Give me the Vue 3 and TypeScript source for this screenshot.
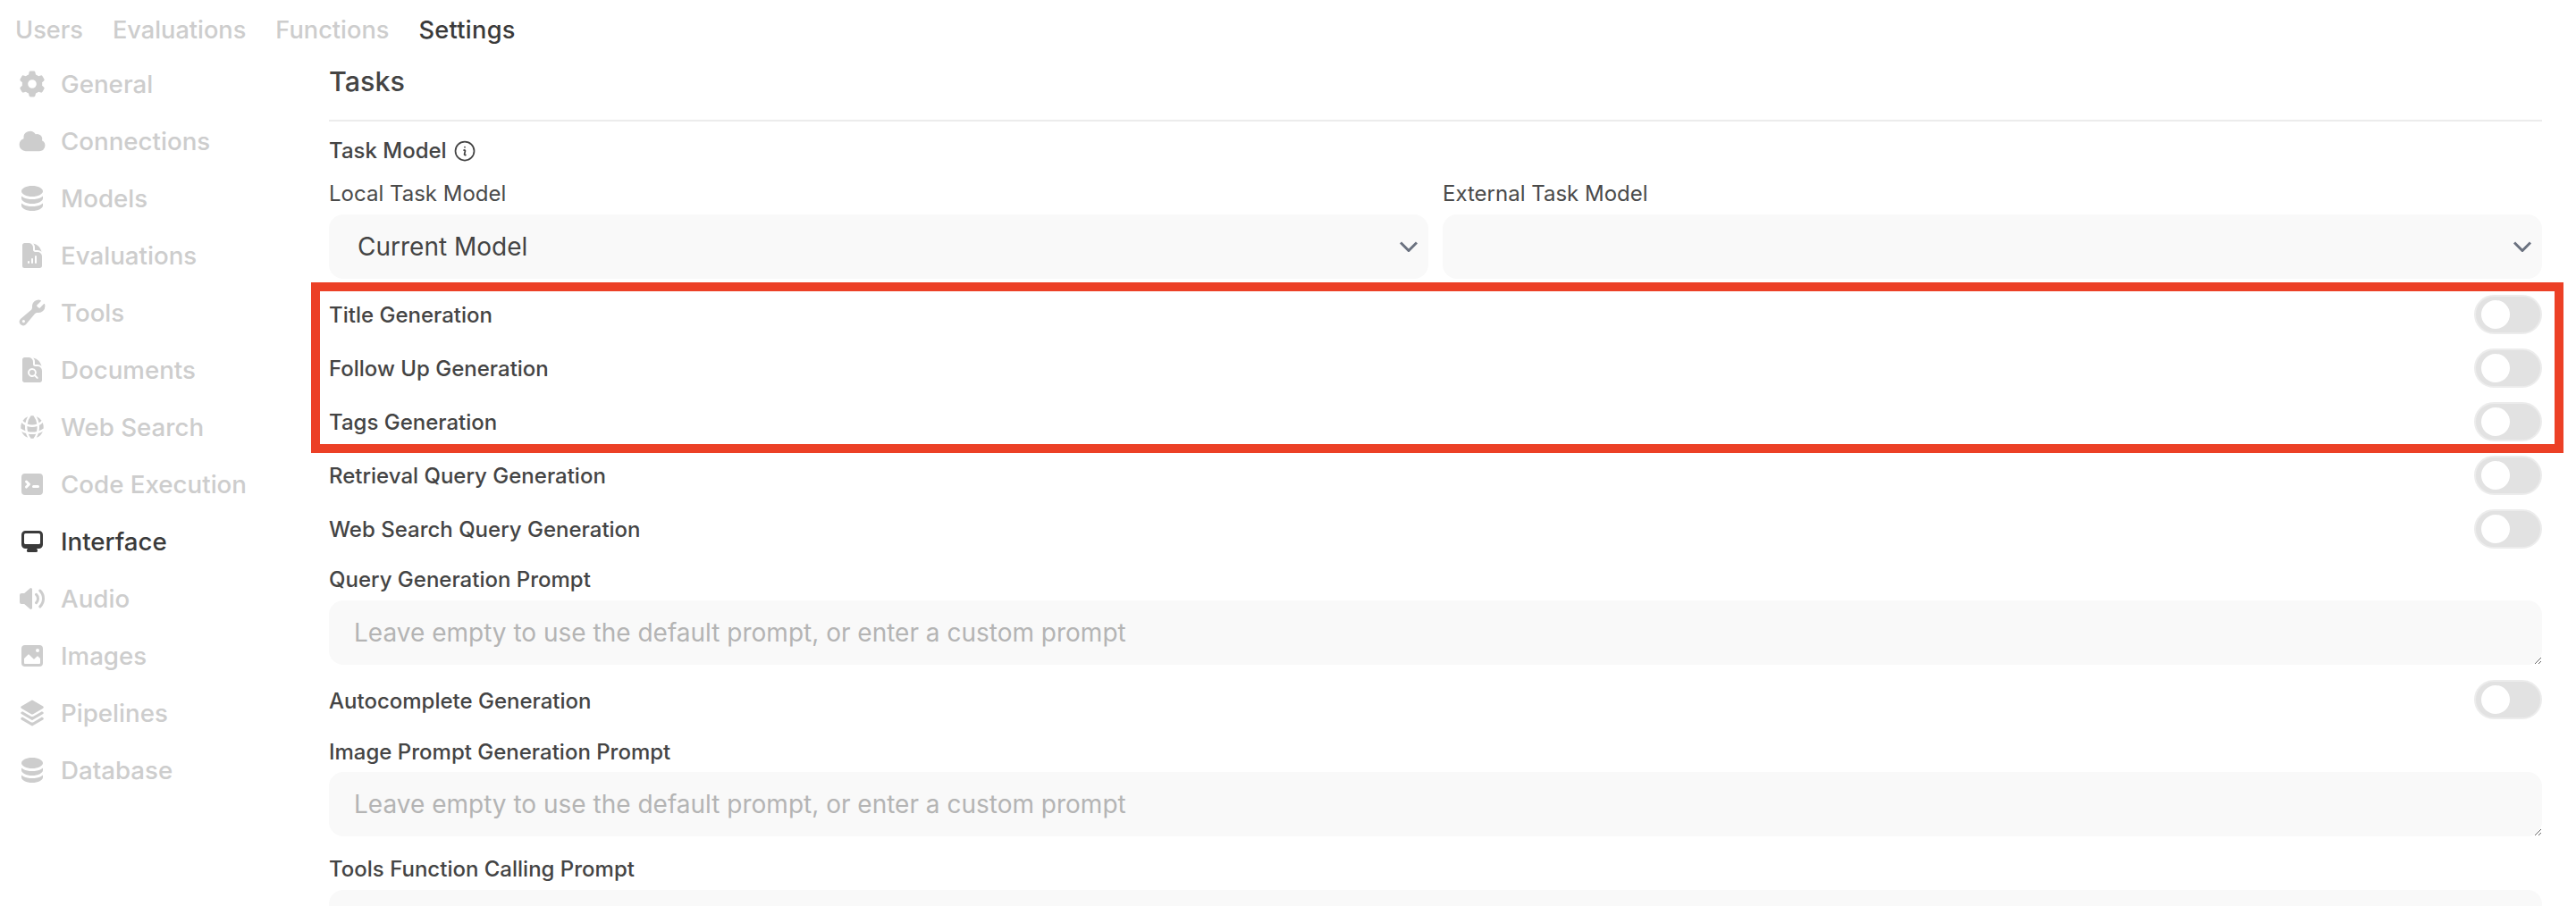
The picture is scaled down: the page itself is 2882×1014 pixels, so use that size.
<script setup lang="ts">
interface NavItem {
  label: string;
  icon: string;
  box: number;
  active?: boolean;
}

const tabs = ["Users", "Evaluations", "Functions", "Settings"];

const stack =
  "M8 7c3.314 0 6-1.343 6-3s-2.686-3-6-3-6 1.343-6 3 2.686 3 6 3ZM8 8.5c1.84 0 3.579-.37 4.914-1.037A6.33 6.33 0 0 0 14 6.78V8c0 1.657-2.686 3-6 3S2 9.657 2 8V6.78c.346.273.72.5 1.087.683C4.42 8.131 6.16 8.5 8 8.5ZM8 12.5c1.84 0 3.579-.37 4.914-1.037.366-.183.74-.41 1.086-.684V12c0 1.657-2.686 3-6 3s-6-1.343-6-3v-1.22c.346.273.72.5 1.087.683C4.42 12.131 6.16 12.5 8 12.5Z";

const navItems: NavItem[] = [
  { label: "General", box: 20, icon: "M7.84 1.804A1 1 0 0 1 8.82 1h2.36a1 1 0 0 1 .98.804l.331 1.652a6.993 6.993 0 0 1 1.929 1.115l1.598-.54a1 1 0 0 1 1.186.447l1.18 2.044a1 1 0 0 1-.205 1.251l-1.267 1.113a7.047 7.047 0 0 1 0 2.228l1.267 1.113a1 1 0 0 1 .206 1.25l-1.18 2.045a1 1 0 0 1-1.187.447l-1.598-.54a6.993 6.993 0 0 1-1.929 1.115l-.33 1.652a1 1 0 0 1-.98.804H8.82a1 1 0 0 1-.98-.804l-.331-1.652a6.993 6.993 0 0 1-1.929-1.115l-1.598.54a1 1 0 0 1-1.186-.447l-1.18-2.044a1 1 0 0 1 .205-1.251l1.267-1.114a7.05 7.05 0 0 1 0-2.227L1.821 7.773a1 1 0 0 1-.206-1.25l1.18-2.045a1 1 0 0 1 1.187-.447l1.598.54A6.992 6.992 0 0 1 7.51 3.456l.33-1.652ZM10 13a3 3 0 1 0 0-6 3 3 0 0 0 0 6Z" },
  { label: "Connections", box: 20, icon: "M1 12.5A4.5 4.5 0 005.5 17H15a4 4 0 001.866-7.539 3.504 3.504 0 00-4.504-4.272A4.5 4.5 0 004.06 8.235 4.502 4.502 0 001 12.5z" },
  { label: "Models", box: 16, icon: stack },
  { label: "Evaluations", box: 24, icon: "M5.625 1.5H9a3.75 3.75 0 0 1 3.75 3.75v1.875c0 1.036.84 1.875 1.875 1.875H16.5a3.75 3.75 0 0 1 3.75 3.75v7.875c0 1.035-.84 1.875-1.875 1.875H5.625a1.875 1.875 0 0 1-1.875-1.875V3.375c0-1.036.84-1.875 1.875-1.875ZM9.75 17.25a.75.75 0 0 0-1.5 0V18a.75.75 0 0 0 1.5 0v-.75Zm2.25-3a.75.75 0 0 1 .75.75v3a.75.75 0 0 1-1.5 0v-3a.75.75 0 0 1 .75-.75Zm3.75-1.5a.75.75 0 0 0-1.5 0V18a.75.75 0 0 0 1.5 0v-5.25ZM14.25 5.25a5.23 5.23 0 0 0-1.279-3.434 9.768 9.768 0 0 1 6.963 6.963A5.23 5.23 0 0 0 16.5 7.5h-1.875a.375.375 0 0 1-.375-.375V5.25Z" },
  { label: "Tools", box: 20, icon: "M19 5.5a4.5 4.5 0 01-4.791 4.49c-.873-.055-1.808.128-2.368.8l-6.024 7.23a2.724 2.724 0 11-3.837-3.837L9.21 8.16c.672-.56.855-1.495.8-2.368a4.5 4.5 0 015.873-4.575c.324.105.39.51.15.752L13.34 4.66a.455.455 0 00-.11.494 3.01 3.01 0 001.617 1.617c.17.07.363.02.493-.111l2.692-2.692c.241-.241.647-.174.752.15.14.435.216.9.216 1.382zM4 17a1 1 0 100-2 1 1 0 000 2z" },
  { label: "Documents", box: 24, icon: "M5.625 1.5c-1.036 0-1.875.84-1.875 1.875v17.25c0 1.035.84 1.875 1.875 1.875h12.75c1.035 0 1.875-.84 1.875-1.875V12.75A3.75 3.75 0 0 0 16.5 9h-1.875a1.875 1.875 0 0 1-1.875-1.875V5.25A3.75 3.75 0 0 0 9 1.5H5.625ZM9.75 14.25a2.25 2.25 0 1 1 4.5 0 2.25 2.25 0 0 1-4.5 0Zm2.25-3.75a3.75 3.75 0 1 0 1.96 6.95l1.76 1.76a.75.75 0 1 0 1.06-1.06l-1.76-1.76A3.75 3.75 0 0 0 12 10.5ZM14.25 5.25a5.23 5.23 0 0 0-1.279-3.434 9.768 9.768 0 0 1 6.963 6.963A5.23 5.23 0 0 0 16.5 7.5h-1.875a.375.375 0 0 1-.375-.375V5.25Z" },
  { label: "Web Search", box: 20, icon: "M16.555 5.412a8.028 8.028 0 00-3.503-2.81 14.899 14.899 0 011.663 4.472 8.547 8.547 0 001.84-1.662zM13.326 7.825a13.43 13.43 0 00-2.413-5.773 8.087 8.087 0 00-1.826 0 13.43 13.43 0 00-2.413 5.773A8.473 8.473 0 0010 8.5c1.18 0 2.304-.24 3.326-.675zM6.514 9.376A9.98 9.98 0 0010 10c1.226 0 2.4-.22 3.486-.624a13.54 13.54 0 01-.351 3.759A13.54 13.54 0 0110 13.5c-1.079 0-2.128-.127-3.134-.366a13.538 13.538 0 01-.352-3.758zM5.285 7.074a14.9 14.9 0 011.663-4.471 8.028 8.028 0 00-3.503 2.81c.529.638 1.149 1.199 1.84 1.66zM17.334 6.798a7.973 7.973 0 01.614 4.115 13.47 13.47 0 01-3.178 1.72 15.093 15.093 0 00.174-3.939 10.043 10.043 0 002.39-1.896zM2.666 6.798a10.042 10.042 0 002.39 1.896 15.196 15.196 0 00.174 3.94 13.472 13.472 0 01-3.178-1.72 7.973 7.973 0 01.615-4.115zM10 15c.898 0 1.778-.079 2.633-.23a13.473 13.473 0 01-1.72 3.178 8.099 8.099 0 01-1.826 0 13.47 13.47 0 01-1.72-3.178c.855.151 1.735.23 2.633.23zM14.357 14.357a14.912 14.912 0 01-1.305 3.04 8.027 8.027 0 004.345-4.345c-.953.542-1.971.981-3.04 1.305zM6.948 17.397a8.027 8.027 0 01-4.345-4.345c.953.542 1.971.981 3.04 1.305a14.912 14.912 0 001.305 3.04z" },
  { label: "Code Execution", box: 16, icon: "M2 4a2 2 0 0 1 2-2h8a2 2 0 0 1 2 2v8a2 2 0 0 1-2 2H4a2 2 0 0 1-2-2V4Zm2.22 1.97a.75.75 0 0 0 0 1.06l.97.97-.97.97a.75.75 0 1 0 1.06 1.06l1.5-1.5a.75.75 0 0 0 0-1.06l-1.5-1.5a.75.75 0 0 0-1.06 0ZM8.75 8.5a.75.75 0 0 0 0 1.5h2.5a.75.75 0 0 0 0-1.5h-2.5Z" },
  { label: "Interface", box: 16, active: true, icon: "M2 4.25A2.25 2.25 0 0 1 4.25 2h7.5A2.25 2.25 0 0 1 14 4.25v5.5A2.25 2.25 0 0 1 11.75 12h-1.312c.1.128.21.248.328.36a.75.75 0 0 1 .234.545v.345a.75.75 0 0 1-.75.75h-4.5a.75.75 0 0 1-.75-.75v-.345a.75.75 0 0 1 .234-.545c.118-.111.228-.232.328-.36H4.25A2.25 2.25 0 0 1 2 9.75v-5.5Zm2.25-.75a.75.75 0 0 0-.75.75v4.5c0 .414.336.75.75.75h7.5a.75.75 0 0 0 .75-.75v-4.5a.75.75 0 0 0-.75-.75h-7.5Z" },
  { label: "Audio", box: 16, icon: "M7.557 2.066A.75.75 0 0 1 8 2.75v10.5a.75.75 0 0 1-1.248.56L3.59 11H2a1 1 0 0 1-1-1V6a1 1 0 0 1 1-1h1.59l3.162-2.81a.75.75 0 0 1 .805-.124ZM12.95 3.05a.75.75 0 1 0-1.06 1.06 5.5 5.5 0 0 1 0 7.78.75.75 0 1 0 1.06 1.06 7 7 0 0 0 0-9.9ZM10.828 5.172a.75.75 0 1 0-1.06 1.06 2.5 2.5 0 0 1 0 3.536.75.75 0 1 0 1.06 1.06 4 4 0 0 0 0-5.656Z" },
  { label: "Images", box: 16, icon: "M2 4a2 2 0 0 1 2-2h8a2 2 0 0 1 2 2v8a2 2 0 0 1-2 2H4a2 2 0 0 1-2-2V4Zm10.5 5.707a.5.5 0 0 0-.146-.353l-1-1a.5.5 0 0 0-.708 0L9.354 9.646a.5.5 0 0 1-.708 0L6.354 7.354a.5.5 0 0 0-.708 0l-2 2a.5.5 0 0 0-.146.353V12a.5.5 0 0 0 .5.5h8a.5.5 0 0 0 .5-.5V9.707ZM12 5a1 1 0 1 1-2 0 1 1 0 0 1 2 0Z" },
  { label: "Pipelines", box: 20, icon: "M3.196 12.87l-.825.483a.75.75 0 000 1.294l7.25 4.25a.75.75 0 00.758 0l7.25-4.25a.75.75 0 000-1.294l-.825-.484-5.666 3.322a2.25 2.25 0 01-2.276 0L3.196 12.87zM3.196 8.87l-.825.483a.75.75 0 000 1.294l7.25 4.25a.75.75 0 00.758 0l7.25-4.25a.75.75 0 000-1.294l-.825-.484-5.666 3.322a2.25 2.25 0 01-2.276 0L3.196 8.87zM10.38 1.103a.75.75 0 00-.76 0l-7.25 4.25a.75.75 0 000 1.294l7.25 4.25a.75.75 0 00.76 0l7.25-4.25a.75.75 0 000-1.294l-7.25-4.25z" },
  { label: "Database", box: 16, icon: stack },
];

const highlighted = ["Title Generation", "Follow Up Generation", "Tags Generation"];
const others = ["Retrieval Query Generation", "Web Search Query Generation"];
const placeholder = "Leave empty to use the default prompt, or enter a custom prompt";
</script>

<template>
  <div class="page">
    <div class="tabs">
      <span v-for="tab in tabs" :key="tab" class="tab" :class="{ current: tab === 'Settings' }">{{ tab }}</span>
    </div>

    <div class="body">
      <nav class="nav">
        <div v-for="item in navItems" :key="item.label" class="nav-item" :class="{ active: item.active }">
          <svg class="nav-icon" :viewBox="`0 0 ${item.box} ${item.box}`" fill="currentColor">
            <path fill-rule="evenodd" clip-rule="evenodd" :d="item.icon" />
          </svg>
          <span>{{ item.label }}</span>
        </div>
      </nav>

      <main class="main">
        <h1 class="title">Tasks</h1>
        <hr class="rule" />

        <div class="label task-model">
          Task Model
          <svg class="info" viewBox="0 0 24 24" fill="none" stroke="currentColor" stroke-width="1.5">
            <path stroke-linecap="round" stroke-linejoin="round" d="m11.25 11.25.041-.02a.75.75 0 0 1 1.063.852l-.708 2.836a.75.75 0 0 0 1.063.853l.041-.021M21 12a9 9 0 1 1-18 0 9 9 0 0 1 18 0Zm-9-3.75h.008v.008H12V8.25Z" />
          </svg>
        </div>

        <div class="selects">
          <div class="field">
            <div class="label plain">Local Task Model</div>
            <div class="select">
              <span>Current Model</span>
              <svg class="chevron" viewBox="0 0 20 12" fill="none" stroke="currentColor" stroke-width="3">
                <path d="M1 1.5l9 9 9-9" />
              </svg>
            </div>
          </div>
          <div class="field">
            <div class="label plain">External Task Model</div>
            <div class="select">
              <span></span>
              <svg class="chevron" viewBox="0 0 20 12" fill="none" stroke="currentColor" stroke-width="3">
                <path d="M1 1.5l9 9 9-9" />
              </svg>
            </div>
          </div>
        </div>

        <div class="rows">
          <div class="highlight-group">
            <div v-for="row in highlighted" :key="row" class="row">
              <span>{{ row }}</span>
              <span class="toggle"><span class="knob"></span></span>
            </div>
            <div class="highlight"></div>
          </div>
          <div v-for="row in others" :key="row" class="row">
            <span>{{ row }}</span>
            <span class="toggle"><span class="knob"></span></span>
          </div>
        </div>

        <div class="label prompt-label">Query Generation Prompt</div>
        <textarea class="prompt" :placeholder="placeholder"></textarea>

        <div class="row auto-row">
          <span class="auto-text">Autocomplete Generation</span>
          <span class="toggle"><span class="knob"></span></span>
        </div>

        <div class="label image-label">Image Prompt Generation Prompt</div>
        <textarea class="prompt image-prompt" :placeholder="placeholder"></textarea>

        <div class="label tools-label">Tools Function Calling Prompt</div>
        <textarea class="prompt" :placeholder="placeholder"></textarea>
      </main>
    </div>
  </div>
</template>

<style scoped>
.page {
  height: 1014px;
  overflow: hidden;
  background: #fff;
  font-family: Inter, "Liberation Sans", sans-serif;
  color: #444;
}

.tabs {
  display: flex;
  gap: 33px;
  height: 62px;
  padding: 16px 0 0 17px;
  box-sizing: border-box;
  font-size: 27.2px;
  line-height: 36px;
  font-weight: 500;
}

.tab {
  color: #cdcdcd;
}

.tab.current {
  color: #3a3a3a;
  letter-spacing: 0.3px;
}

.body {
  display: flex;
}

.nav {
  width: 368px;
  flex: none;
  padding-left: 20px;
  box-sizing: border-box;
}

.nav-item {
  display: flex;
  align-items: center;
  height: 64px;
  gap: 16px;
  font-size: 27.7px;
  font-weight: 500;
  color: #cdcdcd;
}

.nav-item.active {
  color: #3a3a3a;
}

.nav-icon {
  width: 32px;
  height: 32px;
  flex: none;
}

.main {
  flex: 1;
  min-width: 0;
  padding-right: 38px;
}

.title {
  margin: 0;
  height: 58px;
  font-size: 30.5px;
  line-height: 58px;
  font-weight: 500;
  color: #444;
}

.rule {
  height: 2px;
  margin: 14px 0 0;
  border: 0;
  background: #ececec;
}

.label {
  height: 32px;
  font-size: 24px;
  line-height: 34px;
  font-weight: 500;
}

.task-model {
  display: flex;
  align-items: center;
  gap: 6px;
  margin: 17px 0 -1px;
}

.info {
  width: 28px;
  height: 28px;
}

.selects {
  display: grid;
  grid-template-columns: 1fr 1fr;
  gap: 16px;
  margin-top: 16px;
}

.plain {
  font-weight: 400;
  color: #4a4a4a;
}

.select {
  display: flex;
  align-items: center;
  justify-content: space-between;
  height: 72px;
  margin-top: 8px;
  padding: 0 12px 0 32px;
  box-sizing: border-box;
  border-radius: 16px;
  background: #f9f9f9;
  font-size: 28px;
  color: #444;
}

.chevron {
  width: 20px;
  height: 12px;
  color: #6b7280;
}

.rows {
  margin-top: 10px;
}

.highlight-group {
  position: relative;
}

.highlight {
  position: absolute;
  inset: -6px -24px -5px -20px;
  border: 10px solid #ec4026;
  pointer-events: none;
}

.row {
  display: flex;
  align-items: center;
  justify-content: space-between;
  height: 60px;
  font-size: 24px;
  font-weight: 500;
}

.auto-text {
  padding-top: 2px;
}

.toggle {
  display: block;
  width: 76px;
  height: 44px;
  padding: 6px 0 0 8px;
  box-sizing: border-box;
  border: 2px solid #ececec;
  border-radius: 22px;
  background: #e2e2e2;
}

.knob {
  display: block;
  width: 32px;
  height: 32px;
  margin: -2px 0 0 -2px;
  border-radius: 50%;
  background: #fff;
}

.prompt-label {
  margin-top: 10px;
}

.prompt {
  display: block;
  width: 100%;
  height: 72px;
  margin-top: 8px;
  padding: 18px 28px;
  box-sizing: border-box;
  border: 0;
  border-radius: 16px;
  outline: 0;
  resize: vertical;
  background: #f9f9f9;
  font-family: inherit;
  font-size: 28px;
  line-height: 36px;
}

.prompt::placeholder {
  color: #b4b4b4;
}

.auto-row {
  margin-top: 9px;
}

.image-label {
  margin-top: 12px;
}

.image-prompt {
  margin-top: 7px;
}

.tools-label {
  margin-top: 20px;
}
</style>
